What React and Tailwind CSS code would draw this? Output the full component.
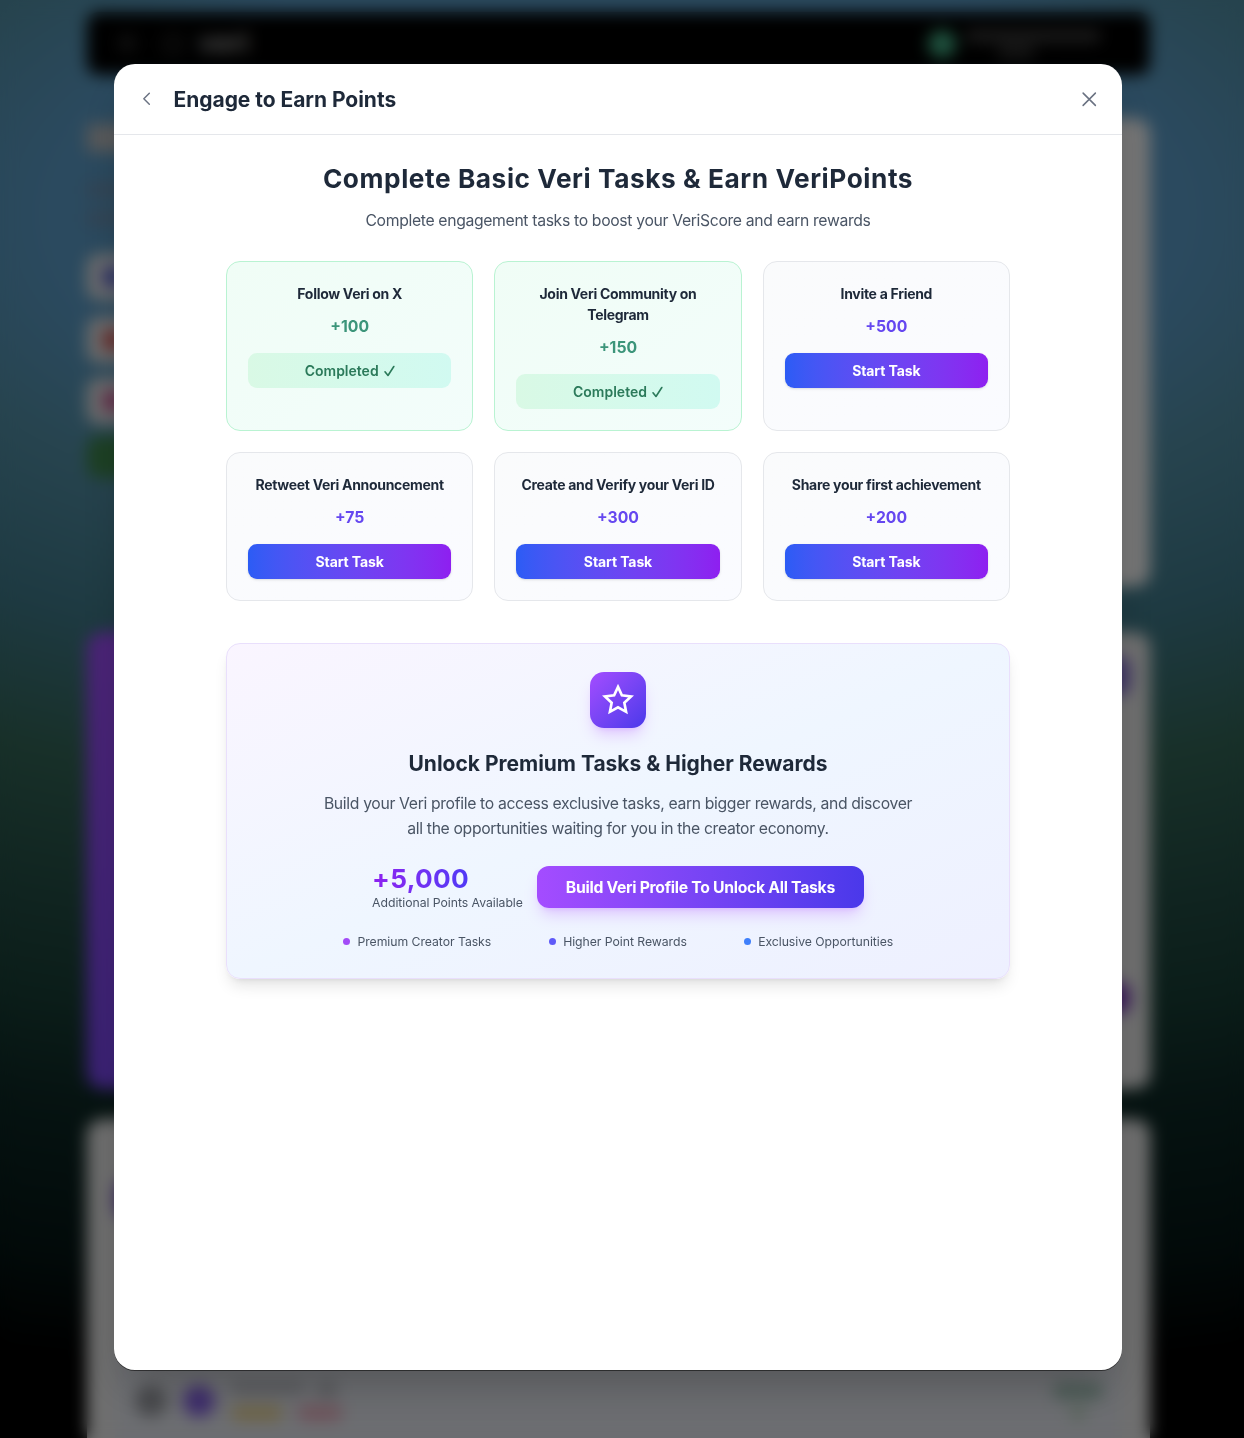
const tasks = [
  { title: "Follow Veri on X", points: 100, done: true },
  { title: "Join Veri Community on Telegram", points: 150, done: true },
  { title: "Invite a Friend", points: 500 },
  { title: "Retweet Veri Announcement", points: 75 },
  { title: "Create and Verify your Veri ID", points: 300 },
  { title: "Share your first achievement", points: 200 },
];

const perks = [
  { label: "Premium Creator Tasks", dot: "bg-[#a24bf7]" },
  { label: "Higher Point Rewards", dot: "bg-[#5f5af8]" },
  { label: "Exclusive Opportunities", dot: "bg-[#3f7ffb]" },
];

function ChevronLeft() {
  return (
    <svg className="size-[17.5px]" viewBox="0 0 24 24" fill="none" stroke="currentColor" strokeWidth="2" strokeLinecap="round" strokeLinejoin="round">
      <path d="M15.5 19.5L8 12l7.5-7.5" />
    </svg>
  );
}

function Close() {
  return (
    <svg className="size-[24.5px]" viewBox="0 0 24 24" fill="none" stroke="currentColor" strokeWidth="1.5" strokeLinecap="round" strokeLinejoin="round">
      <path d="M6 18L18 6M6 6l12 12" />
    </svg>
  );
}

function Star() {
  return (
    <svg className="size-8" viewBox="0 0 24 24" fill="none" stroke="currentColor" strokeWidth="2">
      <path d="M12 2.2l2.9 6.2 6.9.9-5.05 4.7 1.3 6.85L12 17.5l-6.05 3.35 1.3-6.85L2.2 9.3l6.9-.9z" />
    </svg>
  );
}

function Check() {
  return (
    <svg className="h-[12px] w-[11px]" viewBox="0 0 11 12" fill="none" stroke="currentColor" strokeWidth="1.6" strokeLinecap="round" strokeLinejoin="round">
      <path d="M1 6.8l3 3.7L9.8 1.5" />
    </svg>
  );
}

function TaskCard({ title, points, done }) {
  return (
    <div
      className={
        done
          ? "rounded-[14px] border border-[#b9f3d2] bg-gradient-to-br from-[#f0fdf6] to-[#f3fdfb] p-[21px] text-center"
          : "rounded-[14px] border border-gray-200 bg-gradient-to-br from-[#fafbfc] to-[#fafbff] p-[21px] text-center"
      }
    >
      <h4 className="text-sm leading-[21px] font-bold tracking-[-0.3px] text-gray-800">{title}</h4>
      <div
        className={
          done
            ? "mt-[11px] text-[15.75px] leading-[24.5px] font-bold text-[#3c957a]"
            : "mt-[11px] text-[15.75px] leading-[24.5px] font-bold text-[#6547f0]"
        }
      >
        +{points}
      </div>
      {done ? (
        <div className="mt-[13.5px] flex h-[35px] items-center justify-center gap-[5px] rounded-[9px] bg-gradient-to-r from-[#d9f9e5] to-[#d1faf1] text-sm font-semibold text-[#2b7a5a]">
          Completed <Check />
        </div>
      ) : (
        <button className="mt-[13.5px] block h-[35px] w-full rounded-[9px] bg-gradient-to-r from-[#2b5cf5] to-[#8e1ff0] text-sm font-bold tracking-[-0.1px] text-white shadow-sm">
          Start Task
        </button>
      )}
    </div>
  );
}

function Backdrop() {
  return (
    <div className="absolute inset-0 h-[1438px] overflow-hidden bg-[radial-gradient(2600px_1180px_at_618px_215px,#5694be_0%,#5694be_22%,#4e889e_29%,#3c7484_39.5%,#306052_50.5%,#204840_62%,#163a32_70%,#0c2623_78%,#041413_90.5%,#000_99%)]">
      <div className="mx-auto w-[1063px] -translate-x-1">
        <div className="mt-[12px] flex h-[63px] items-center rounded-xl bg-black px-7 text-[#5a5a5a]">
          <div className="ml-1 flex size-4 flex-col justify-around">
            <i className="h-0.5 bg-current" />
            <i className="h-0.5 bg-current" />
            <i className="h-0.5 bg-current" />
          </div>
          <i className="ml-7 size-5 rounded-full border-2" />
          <b className="ml-4 font-['Inter',sans-serif] text-[27px] text-[#a0a0a0]">veri</b>
          <i className="ml-auto size-7 rounded-full bg-[#40a880]" />
          <div className="ml-2.5 w-[156px]">
            <i className="block h-3 w-[134px] bg-[#3c3c3c]" />
            <i className="mt-1 ml-8 block h-3 w-9 bg-[#303030]" />
          </div>
        </div>

        <div className="mt-[43px] flex h-[469px] justify-between">
          <div className="w-[400px]">
            <div className="mt-1.5 h-7 w-60 bg-[#b2b4b6]" />
            <div className="mt-8 h-3 w-80 bg-[#6a87a4]" />
            <div className="mt-4 h-3 w-80 bg-[#6a87a4]" />
            <div className="mt-[30px] flex h-[46px] w-40 items-center rounded-xl bg-[#dcdcdc] px-4">
              <i className="size-5 rounded bg-[#4f5bc8]" />
            </div>
            <div className="mt-[17px] flex h-[46px] w-40 items-center rounded-xl bg-[#dcdcdc] px-4">
              <i className="size-5 rounded bg-[#c85050]" />
            </div>
            <div className="mt-[15px] flex h-[46px] w-40 items-center rounded-xl bg-[#dcdcdc] px-4">
              <i className="size-5 rounded bg-[#c04f8c]" />
            </div>
            <div className="mt-[12px] h-[42px] w-40 rounded-xl bg-[#3a8048]" />
          </div>
          <div className="w-[600px] rounded-2xl bg-[#ececec]" />
        </div>

        <div className="mt-[45px] flex h-[457px] justify-between">
          <div className="w-[500px] rounded-2xl bg-gradient-to-b from-[#9848f0] to-[#7644ea]" />
          <div className="flex w-[500px] flex-col items-end rounded-2xl bg-[#e0e0e0] px-5">
            <i className="mt-6 h-10 w-24 rounded-xl bg-[#7a64c8]" />
            <i className="mt-[286px] h-8 w-24 rounded-xl bg-[#7030b0]" />
          </div>
        </div>

        <div className="mt-[30px] h-[400px] rounded-2xl bg-[#dedede] px-7">
          <div className="flex h-[100px] items-end">
            <i className="h-10 w-24 rounded-xl bg-[#6a48b8]" />
          </div>
          <div className="mt-[130px] flex h-[103px] items-center rounded-xl bg-[#d8dbe2] px-5">
            <i className="size-8 rounded-full bg-[#909298]" />
            <i className="ml-4 size-8 rounded-full bg-[#7c5ad8]" />
            <div className="ml-4">
              <div className="flex gap-3">
                <i className="h-3 w-[74px] bg-[#b4b6bc]" />
                <i className="h-4 w-5 rounded bg-[#b4b6bc]" />
              </div>
              <div className="mt-2 flex gap-[14px]">
                <i className="h-4 w-[52px] rounded-full bg-[#dcc88c]" />
                <i className="h-4 w-[46px] rounded-full bg-[#dca4b4]" />
              </div>
            </div>
            <div className="ml-auto flex flex-col items-center">
              <i className="h-4 w-12 bg-[#98b8ac]" />
              <i className="mt-2 h-3 w-4 bg-[#b0c8b4]" />
            </div>
          </div>
        </div>
      </div>
    </div>
  );
}

export default function App() {
  return (
    <div className="relative h-[1438px] w-full overflow-hidden font-['Inter',sans-serif]">
      <Backdrop />
      <div className="absolute inset-0 flex items-start bg-black/50 pt-16 pl-[114px] backdrop-blur-sm">
        <div className="flex h-[1306px] w-[1008px] flex-col rounded-[21px] bg-white shadow-[0_1px_0_rgba(0,0,0,0.5),0_22px_44px_-11px_rgba(0,0,0,0.25)]">
          <header className="flex h-[71px] shrink-0 items-center border-b border-gray-200 px-[21px]">
            <button className="ml-[3px] text-gray-500">
              <ChevronLeft />
            </button>
            <h2 className="mt-[2px] ml-[18px] text-[21px] leading-7 font-bold tracking-[-0.04px] text-gray-800">Engage to Earn Points</h2>
            <button className="ml-auto text-gray-500">
              <Close />
            </button>
          </header>

          <main className="mx-auto w-[784px] pt-7 text-center">
            <h3 className="text-[26.25px] leading-8 font-bold tracking-[0.56px] text-gray-800">
              Complete Basic Veri Tasks &amp; Earn VeriPoints
            </h3>
            <p className="mt-[13px] text-[15.75px] leading-[25px] tracking-[-0.342px] text-gray-600">
              Complete engagement tasks to boost your VeriScore and earn rewards
            </p>

            <div className="mt-7 grid grid-cols-3 gap-[21px]">
              {tasks.map((task) => (
                <TaskCard key={task.title} {...task} />
              ))}
            </div>

            <section className="mt-[42px] flex h-[336px] flex-col items-center rounded-[14px] border border-[#e9dffc] bg-gradient-to-br from-[#faf5ff] via-[#eff6ff] to-[#eef0ff] pt-7 shadow-lg">
              <div className="flex size-14 items-center justify-center rounded-[14px] bg-gradient-to-br from-[#a44cff] to-[#4a38ea] text-white shadow-lg shadow-purple-500/25">
                <Star />
              </div>
              <h3 className="mt-[22px] text-[21px] leading-7 font-bold tracking-[-0.02px] text-gray-800">
                Unlock Premium Tasks &amp; Higher Rewards
              </h3>
              <p className="mt-[13px] w-[600px] text-[15.75px] leading-[25px] tracking-[-0.347px] text-gray-600">
                Build your Veri profile to access exclusive tasks, earn bigger rewards, and discover
                <br />
                all the opportunities waiting for you in the creator economy.
              </p>
              <div className="mt-[22px] flex items-center gap-[14px]">
                <div className="flex flex-col items-start">
                  <div className="bg-gradient-to-r from-[#8e1ff0] to-[#4f39f6] bg-clip-text text-[26.25px] leading-[31px] font-bold tracking-[0.3px] text-transparent">
                    +5,000
                  </div>
                  <div className="text-[12.25px] leading-[17px] tracking-[-0.05px] text-gray-600">Additional Points Available</div>
                </div>
                <button className="h-[42px] w-[327px] rounded-[12px] bg-gradient-to-r from-[#a44cff] to-[#4a38ea] pt-[2px] text-[15.75px] font-bold tracking-[-0.3px] text-white shadow-lg shadow-purple-500/25">
                  Build Veri Profile To Unlock All Tasks
                </button>
              </div>
              <div className="mt-[22px] grid w-[588px] grid-cols-3 gap-[14px]">
                {perks.map((perk) => (
                  <div key={perk.label} className="flex items-center justify-center gap-[7px] text-[12.25px] leading-[17.5px] tracking-[-0.05px] text-gray-600">
                    <i className={`size-[7px] rounded-full ${perk.dot}`} />
                    {perk.label}
                  </div>
                ))}
              </div>
            </section>
          </main>
        </div>
      </div>
    </div>
  );
}
